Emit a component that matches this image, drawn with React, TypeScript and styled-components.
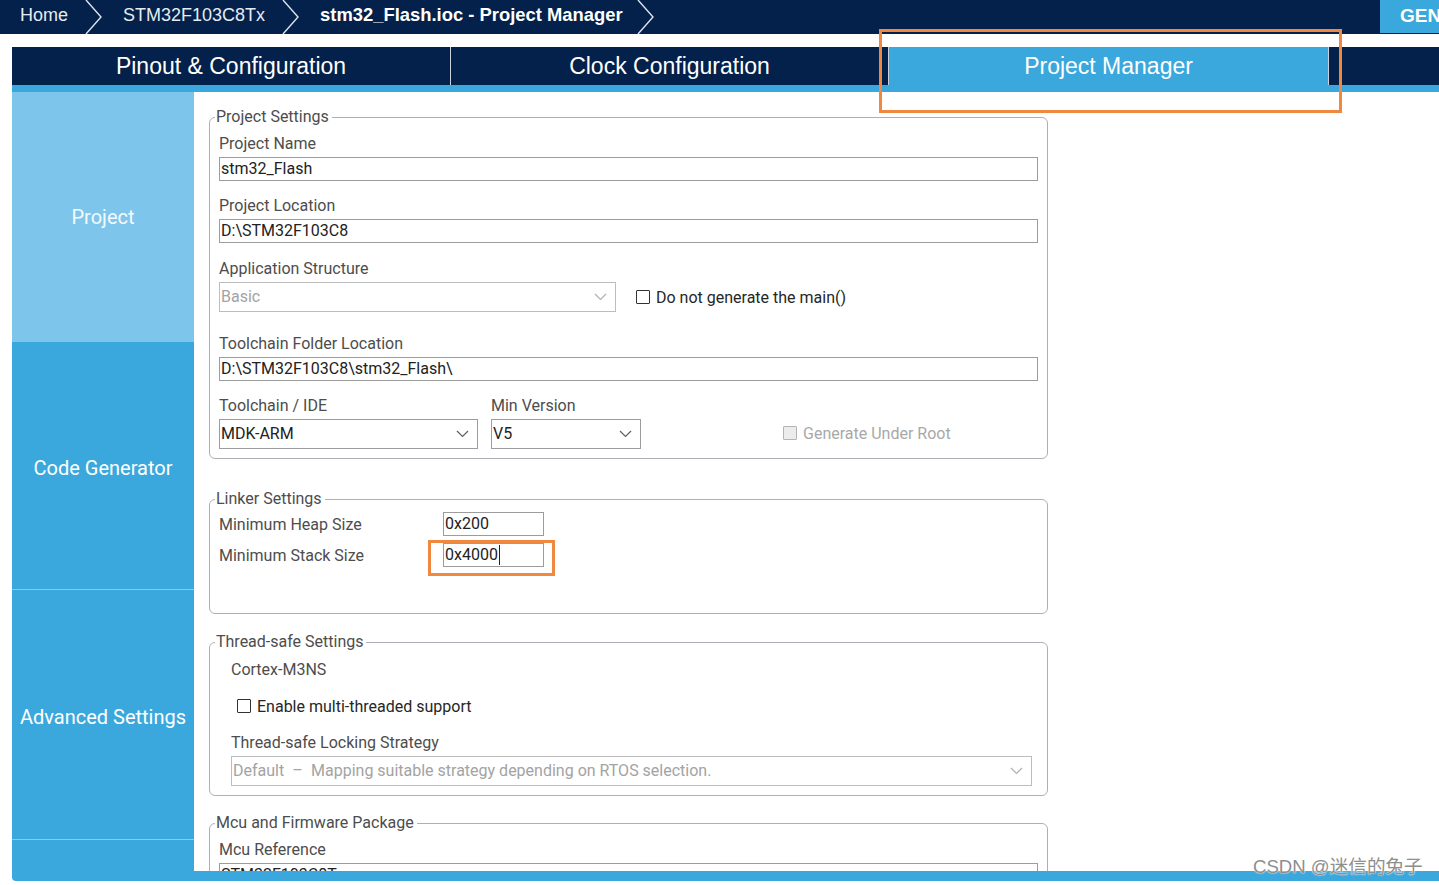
import React from 'react';
import styled, { createGlobalStyle } from 'styled-components';

const NAVY = '#03214a';
const BLUE = '#3aa8dc';
const LIGHT = '#7dc5ea';
const ORANGE = '#f0893f';

const GlobalStyle = createGlobalStyle`
  html, body {
    margin: 0;
    padding: 0;
    background: #fff;
    overflow: hidden;
  }
  body {
    font-family: Roboto, "Liberation Sans", Arial, sans-serif;
  }
`;

const Page = styled.div`
  width: 1439px;
  height: 885px;
  display: flex;
  flex-direction: column;
  overflow: hidden;
  position: relative;
  background: #fff;
`;

/* ---------- top breadcrumb bar ---------- */

const TopBar = styled.header`
  height: 34px;
  flex-shrink: 0;
  background: ${NAVY};
  display: flex;
  align-items: stretch;
  font-family: "Liberation Sans", Arial, sans-serif;
  font-size: 18px;
  color: #fff;
`;

const Crumb = styled.div<{ $bold?: boolean }>`
  display: flex;
  align-items: center;
  padding: 0 ${(p) => (p.$bold ? 12 : 15)}px 4px 20px;
  font-weight: ${(p) => (p.$bold ? 700 : 400)};
  font-size: ${(p) => (p.$bold ? 18.4 : 18)}px;
  color: ${(p) => (p.$bold ? '#fff' : '#e6ebf2')};
  white-space: nowrap;
`;

const ChevronSep = styled.svg`
  width: 20px;
  height: 34px;
  flex-shrink: 0;
`;

const GenButton = styled.button`
  margin-left: auto;
  width: 59px;
  height: 33px;
  border: none;
  background: ${BLUE};
  color: #fff;
  font-family: "Liberation Sans", Arial, sans-serif;
  font-weight: 700;
  font-size: 19px;
  padding: 0 0 2px 20px;
  text-align: left;
  white-space: nowrap;
  overflow: hidden;
`;

const Crumbs: React.FC = () => {
  const items = ['Home', 'STM32F103C8Tx', 'stm32_Flash.ioc - Project Manager'];
  return (
    <>
      {items.map((label, i) => (
        <React.Fragment key={label}>
          <Crumb $bold={i === items.length - 1}>{label}</Crumb>
          <ChevronSep viewBox="0 0 20 34">
            <polyline points="3,0 18,17 3,34" fill="none" stroke="#dfe5ee" strokeWidth="1.4" />
          </ChevronSep>
        </React.Fragment>
      ))}
    </>
  );
};

/* ---------- tabs ---------- */

const TabRow = styled.nav`
  margin: 13px 0 0 12px;
  height: 45px;
  flex-shrink: 0;
  display: flex;
  align-items: flex-start;
  background: ${BLUE};
  font-family: "Liberation Sans", Arial, sans-serif;
  font-size: 23px;
  color: #fff;
`;

const Tab = styled.div<{ $active?: boolean; $w: number }>`
  position: relative;
  width: ${(p) => p.$w}px;
  box-sizing: border-box;
  height: ${(p) => (p.$active ? 45 : 38)}px;
  padding-bottom: ${(p) => (p.$active ? 7 : 0)}px;
  display: flex;
  align-items: center;
  justify-content: center;
  background: ${(p) => (p.$active ? BLUE : NAVY)};
  border-right: ${(p) => (p.$active ? 'none' : '1px solid #c9d2de')};
`;

const TabFill = styled.div`
  flex: 1;
  height: 38px;
  background: ${NAVY};
  border-left: 1px solid #c9d2de;
`;

const Highlight = styled.div<{ $l: number; $t: number; $w: number; $h: number }>`
  position: absolute;
  left: ${(p) => p.$l}px;
  top: ${(p) => p.$t}px;
  width: ${(p) => p.$w}px;
  height: ${(p) => p.$h}px;
  border: 3px solid ${ORANGE};
  box-sizing: border-box;
  pointer-events: none;
`;

/* ---------- main area ---------- */

const Main = styled.main`
  margin-left: 12px;
  height: 779px;
  flex-shrink: 0;
  display: flex;
`;

const Sidebar = styled.aside`
  width: 182px;
  flex-shrink: 0;
  display: flex;
  flex-direction: column;
  background: ${BLUE};
`;

const SideItem = styled.div<{ $active?: boolean; $h: number; $divider?: boolean }>`
  height: ${(p) => p.$h}px;
  flex-shrink: 0;
  box-sizing: border-box;
  padding-top: ${(p) => (p.$active ? 0 : 5)}px;
  display: flex;
  align-items: center;
  justify-content: center;
  background: ${(p) => (p.$active ? LIGHT : BLUE)};
  border-top: ${(p) => (p.$divider ? '1px solid #86cbee' : 'none')};
  color: ${(p) => (p.$active ? '#f3faff' : '#fff')};
  font-size: 20px;
  white-space: nowrap;
`;

const Content = styled.section`
  flex: 1;
  overflow: hidden;
  padding: 15px 0 0 15px;
  display: flex;
  flex-direction: column;
  align-items: flex-start;
`;

const BottomStrip = styled.div`
  margin-left: 12px;
  height: 10px;
  flex-shrink: 0;
  background: ${BLUE};
  border-bottom-left-radius: 4px;
`;

/* ---------- form parts ---------- */

const Group = styled.fieldset<{ $pb?: number; $mb?: number }>`
  margin: 0 0 ${(p) => p.$mb ?? 17}px 0;
  width: 839px;
  box-sizing: border-box;
  border: 1px solid #adb1b5;
  border-radius: 6px;
  padding: 7px 9px ${(p) => p.$pb ?? 9}px 9px;
  min-width: 0;
  flex-shrink: 0;
`;

const Legend = styled.legend`
  font-size: 16px;
  line-height: 20px;
  color: #4d4d4d;
  padding: 0 3px 0 1px;
  margin-left: -4px;
`;

const Label = styled.div<{ $mt?: number }>`
  margin: ${(p) => p.$mt ?? 0}px 0 3px 0;
  font-size: 16px;
  line-height: 20px;
  color: #4d4d4d;
  white-space: nowrap;
`;

const TextBox = styled.div<{ $w?: number }>`
  width: ${(p) => (p.$w ? `${p.$w}px` : '100%')};
  height: 24px;
  box-sizing: border-box;
  border: 1px solid #9c9c9c;
  padding: 0 1px 1px 1px;
  display: flex;
  align-items: center;
  font-size: 16px;
  color: #222;
  background: #fff;
  white-space: nowrap;
  overflow: hidden;
`;

const Caret = styled.span`
  display: inline-block;
  width: 1px;
  height: 20px;
  background: #222;
  margin-left: 1px;
`;

const SelectBox = styled.div<{ $w?: number; $disabled?: boolean }>`
  width: ${(p) => (p.$w ? `${p.$w}px` : '100%')};
  height: 30px;
  box-sizing: border-box;
  flex-shrink: 0;
  border: 1px solid ${(p) => (p.$disabled ? '#bdbdbd' : '#9c9c9c')};
  padding: 0 8px 1px 1px;
  display: flex;
  align-items: center;
  justify-content: space-between;
  font-size: 16px;
  color: ${(p) => (p.$disabled ? '#a3a3a3' : '#222')};
  background: #fff;
  white-space: pre;
`;

const Select: React.FC<{ value: string; w?: number; disabled?: boolean }> = ({ value, w, disabled }) => (
  <SelectBox $w={w} $disabled={disabled}>
    <span>{value}</span>
    <svg width="13" height="8" viewBox="0 0 13 8">
      <polyline
        points="1,1 6.5,6.5 12,1"
        fill="none"
        stroke={disabled ? '#b0b0b0' : '#606060'}
        strokeWidth="1.2"
      />
    </svg>
  </SelectBox>
);

const CheckRow = styled.label<{ $disabled?: boolean; $ml?: number; $pl?: number }>`
  display: flex;
  align-items: center;
  gap: 6px;
  margin-left: ${(p) => p.$ml ?? 0}px;
  padding-left: ${(p) => p.$pl ?? 0}px;
  height: 20px;
  font-size: 16px;
  color: ${(p) => (p.$disabled ? '#a8a8a8' : '#262626')};
  white-space: nowrap;
`;

const Box = styled.span<{ $disabled?: boolean }>`
  width: 14px;
  height: 14px;
  box-sizing: border-box;
  border: 1px solid ${(p) => (p.$disabled ? '#b4b4b4' : '#333')};
  background: ${(p) => (p.$disabled ? '#ececec' : '#fff')};
  border-radius: 1px;
`;

const Row = styled.div<{ $align?: string; $mt?: number }>`
  display: flex;
  align-items: ${(p) => p.$align ?? 'center'};
  margin-top: ${(p) => p.$mt ?? 0}px;
`;

const Col = styled.div<{ $w: number; $ml?: number }>`
  width: ${(p) => p.$w}px;
  margin-left: ${(p) => p.$ml ?? 0}px;
  display: flex;
  flex-direction: column;
`;

const CheckCell = styled.div`
  height: 30px;
  padding-bottom: 2px;
  box-sizing: border-box;
  display: flex;
  align-items: center;
`;

const LinkerLabel = styled.div`
  width: 224px;
  font-size: 16px;
  color: #4d4d4d;
`;

const Anchor = styled.div`
  position: relative;
`;

const Indent = styled.div`
  padding: 0 6px 0 12px;
`;

const Watermark = styled.div`
  position: absolute;
  left: 1253px;
  top: 851px;
  font-family: "Liberation Sans", "Noto Sans CJK SC", sans-serif;
  font-size: 18.6px;
  color: #8e8e8e;
  text-shadow: 0 0 2px #fff, 0 0 1px #fff;
  white-space: nowrap;
`;

export default function App() {
  return (
    <Page>
      <GlobalStyle />
      <TopBar>
        <Crumbs />
        <GenButton>GENERATE CODE</GenButton>
      </TopBar>

      <TabRow>
        <Tab $w={439}>Pinout &amp; Configuration</Tab>
        <Tab $w={438}>Clock Configuration</Tab>
        <Tab $w={439} $active>
          Project Manager
          <Highlight $l={-10} $t={-18} $w={463} $h={84} />
        </Tab>
        <TabFill />
      </TabRow>

      <Main>
        <Sidebar>
          <SideItem $h={250} $active>Project</SideItem>
          <SideItem $h={247}>Code Generator</SideItem>
          <SideItem $h={250} $divider>Advanced Settings</SideItem>
          <SideItem $h={32} $divider />
        </Sidebar>

        <Content>
          <Group $mb={30}>
            <Legend>Project Settings</Legend>
            <Label>Project Name</Label>
            <TextBox>stm32_Flash</TextBox>

            <Label $mt={15}>Project Location</Label>
            <TextBox>D:\STM32F103C8</TextBox>

            <Label $mt={16}>Application Structure</Label>
            <Row>
              <Select value="Basic" w={397} disabled />
              <CheckRow $ml={20}>
                <Box />
                Do not generate the main()
              </CheckRow>
            </Row>

            <Label $mt={22}>Toolchain Folder Location</Label>
            <TextBox>D:\STM32F103C8\stm32_Flash\</TextBox>

            <Row $align="flex-end" $mt={15}>
              <Col $w={259}>
                <Label>Toolchain / IDE</Label>
                <Select value="MDK-ARM" />
              </Col>
              <Col $w={150} $ml={13}>
                <Label>Min Version</Label>
                <Select value="V5" />
              </Col>
              <CheckCell>
                <CheckRow $disabled $ml={142}>
                  <Box $disabled />
                  Generate Under Root
                </CheckRow>
              </CheckCell>
            </Row>
          </Group>

          <Group $mb={18} $pb={46}>
            <Legend>Linker Settings</Legend>
            <Row $mt={-4}>
              <LinkerLabel>Minimum Heap Size</LinkerLabel>
              <TextBox $w={101}>0x200</TextBox>
            </Row>
            <Row $mt={7}>
              <LinkerLabel>Minimum Stack Size</LinkerLabel>
              <Anchor>
                <TextBox $w={101}>
                  0x4000
                  <Caret />
                </TextBox>
                <Highlight $l={-15} $t={-3} $w={127} $h={36} />
              </Anchor>
            </Row>
          </Group>

          <Group $mb={17}>
            <Legend>Thread-safe Settings</Legend>
            <Indent>
              <Label $mt={1}>Cortex-M3NS</Label>
              <Row $mt={16}>
                <CheckRow $pl={6}>
                  <Box />
                  Enable multi-threaded support
                </CheckRow>
              </Row>
              <Label $mt={17}>Thread-safe Locking Strategy</Label>
              <Select
                value={'Default\u2002\u2013\u2002Mapping suitable strategy depending on RTOS selection.'}
                disabled
              />
            </Indent>
          </Group>

          <Group>
            <Legend>Mcu and Firmware Package</Legend>
            <Label>Mcu Reference</Label>
            <TextBox>STM32F103C8Tx</TextBox>
          </Group>
        </Content>
      </Main>

      <BottomStrip />
      <Watermark>CSDN @迷信的兔子</Watermark>
    </Page>
  );
}
